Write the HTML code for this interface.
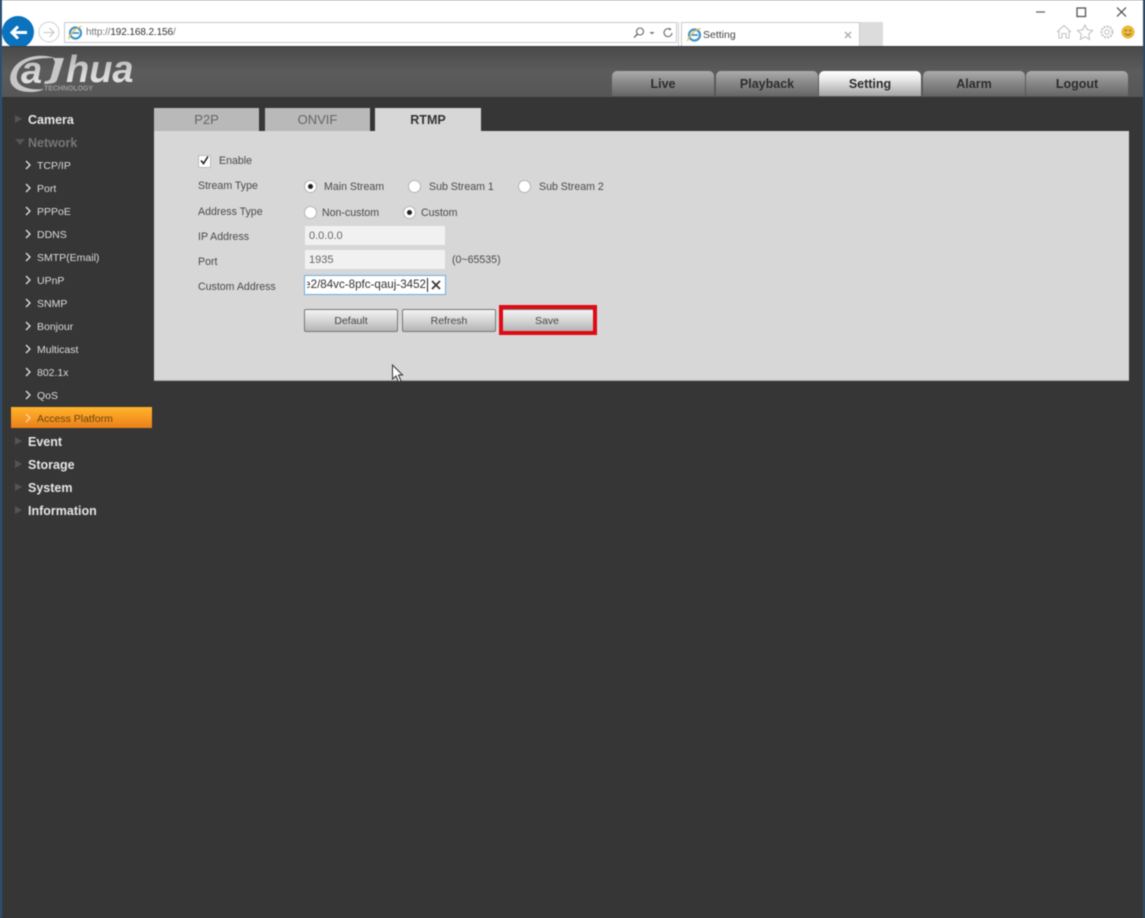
<!DOCTYPE html>
<html><head><meta charset="utf-8"><title>Setting</title>
<style>
html,body{margin:0;padding:0}
body{width:1145px;height:918px;position:relative;overflow:hidden;background:#363636;font-family:"Liberation Sans",sans-serif}
#w{position:absolute;left:0;top:0;width:1145px;height:918px;overflow:hidden;filter:blur(.45px)}
.a{position:absolute;white-space:nowrap}
.nav{position:absolute;top:71px;width:102px;height:25px;border-radius:5px 5px 0 0;background:linear-gradient(#acacac,#8e8e8e 40%,#666);text-align:center;font:bold 12.5px/26px "Liberation Sans",sans-serif;color:#2c2c2c;box-sizing:border-box}
.nav.on{background:linear-gradient(#fff,#e8e8e8 35%,#a4a4a4)}
.h{position:absolute;left:28px;color:#e6e6e6;font:bold 12.5px/16px "Liberation Sans",sans-serif}
.s{position:absolute;left:37px;color:#dcdcdc;font:10.5px/14px "Liberation Sans",sans-serif}
.tri{position:absolute;left:15px;width:0;height:0;border-left:7px solid #555;border-top:4.5px solid transparent;border-bottom:4.5px solid transparent}
.tab{position:absolute;top:108px;height:23px;background:#b9b9b9;text-align:center;font:13px/23px "Liberation Sans",sans-serif;color:#666}
.l{position:absolute;left:198px;font:10.6px/14px "Liberation Sans",sans-serif;color:#4a4a4a;white-space:nowrap}
.r{position:absolute;width:11px;height:11px;border-radius:50%;background:#fff;border:1px solid #b5b5b5}
.r.c::after{content:"";position:absolute;left:3px;top:3px;width:5px;height:5px;border-radius:50%;background:#222}
.in{position:absolute;left:305px;width:140px;height:19px;background:#f1f1f1;font:11px/21px "Liberation Sans",sans-serif;color:#666;text-indent:4px}
.b{position:absolute;top:309px;width:94px;height:23px;box-sizing:border-box;border:1px solid #777;border-radius:2px;background:linear-gradient(#f3f3f3,#d6d6d6 50%,#b4b4b4);text-align:center;font:10.5px/22px "Liberation Sans",sans-serif;color:#444}
</style></head><body><div id="w">
<!-- browser chrome -->
<div class="a" style="left:0;top:0;width:1145px;height:46px;background:#fff"></div>
<div class="a" style="left:0;top:0;width:2px;height:918px;background:#2a5578"></div>
<div class="a" style="left:1143px;top:0;width:2px;height:918px;background:#2a4f70"></div>
<svg class="a" style="left:0;top:14px" width="64" height="34" viewBox="0 0 64 34">
<circle cx="18" cy="18" r="16" fill="#0b72bd"/>
<path d="M27 18.500H12M18 12.500l-6 6 6 6" fill="none" stroke="#fff" stroke-width="3"/>
<circle cx="49" cy="18" r="10" fill="#fff" stroke="#d0d0d0"/>
<path d="M43.500 18.500h10M49.500 14l4.500 4.500-4.500 4.500" fill="none" stroke="#c4c4c4" stroke-width="1.100"/>
</svg>
<div class="a" style="left:64px;top:22px;width:613px;height:21px;box-sizing:border-box;border:1px solid #c4cccc;background:#fff"></div>
<svg class="a" style="left:67px;top:25px" width="16" height="16" viewBox="0 0 16 16"><circle cx="8.500" cy="8" r="5.500" fill="none" stroke="#3f94cc" stroke-width="2.200"/><path d="M5 8h7" stroke="#3f94cc" stroke-width="1.800"/><path d="M1.500 14C3 9 9 2.500 14.500 1.500" stroke="#e9c04a" stroke-width="1.300" fill="none"/></svg>
<div class="a" style="left:86px;top:26px;font:10px/14px 'Liberation Sans',sans-serif;color:#777;letter-spacing:-.1px">http://<span style="color:#333">192.168.2.156</span>/</div>
<svg class="a" style="left:630px;top:25px" width="46" height="16" viewBox="0 0 46 16"><circle cx="10" cy="6.500" r="3.500" fill="none" stroke="#666" stroke-width="1.100"/><path d="M7.500 9l-3.500 3.500" stroke="#666" stroke-width="1.300"/><path d="M19.500 7h5l-2.500 2.500z" fill="#777"/><path d="M40.500 4.500a4 4 0 1 0 1.500 3.500" fill="none" stroke="#666" stroke-width="1.100"/><path d="M39.500 2.500l2 2-2.500 1" fill="#666"/></svg>
<div class="a" style="left:678px;top:22px;width:1px;height:24px;background:#d0d0d0"></div>
<div class="a" style="left:681px;top:22px;width:179px;height:24px;box-sizing:border-box;border:1px solid #c8cccc;border-bottom:0;background:#fff"></div>
<div class="a" style="left:860px;top:22px;width:23px;height:24px;background:#dcdcdc"></div>
<svg class="a" style="left:686px;top:27px" width="16" height="16" viewBox="0 0 16 16"><circle cx="8.500" cy="8" r="5.500" fill="none" stroke="#3f94cc" stroke-width="2.200"/><path d="M5 8h7" stroke="#3f94cc" stroke-width="1.800"/><path d="M1.500 14C3 9 9 2.500 14.500 1.500" stroke="#e9c04a" stroke-width="1.300" fill="none"/></svg>
<div class="a" style="left:703px;top:28px;font:10.5px/14px 'Liberation Sans',sans-serif;color:#444">Setting</div>
<svg class="a" style="left:843px;top:30px" width="10" height="10" viewBox="0 0 10 10"><path d="M2 2l6 6M8 2l-6 6" stroke="#aaa" stroke-width="1.400"/></svg>
<svg class="a" style="left:1030px;top:4px" width="105" height="16" viewBox="0 0 105 16"><path d="M6 8h9" stroke="#666" stroke-width="1.300"/><rect x="47" y="4" width="8.500" height="8.500" fill="none" stroke="#555" stroke-width="1.300"/><path d="M87 3.500l9 9M96 3.500l-9 9" stroke="#444" stroke-width="1.200"/></svg>
<svg class="a" style="left:1055px;top:23px" width="84" height="18" viewBox="0 0 84 18">
<path d="M2 9l7-6.500L16 9M4 8v7h3v-4.500h4V15h3V8" fill="none" stroke="#c2c2c2" stroke-width="1.100"/>
<path d="M30 2l2.300 4.800 5.200.7-3.800 3.600.9 5.200-4.600-2.500-4.600 2.500.9-5.200L22.500 7.500l5.200-.7z" fill="none" stroke="#c2c2c2" stroke-width="1.100"/>
<circle cx="52" cy="9" r="5.500" fill="none" stroke="#c2c2c2" stroke-width="2" stroke-dasharray="2 1.200"/><circle cx="52" cy="9" r="2.300" fill="none" stroke="#c2c2c2"/>
<circle cx="73" cy="9" r="6.500" fill="#e9b83c"/><circle cx="70.800" cy="7.500" r=".9" fill="#8a6a10"/><circle cx="75.200" cy="7.500" r=".9" fill="#8a6a10"/><path d="M70 10.500c1.500 2 4.500 2 6 0" fill="none" stroke="#8a6a10"/>
</svg>
<!-- header -->
<div class="a" style="left:2px;top:46px;width:1141px;height:51px;background:linear-gradient(#4a4a4a,#5c5c5c 50%,#565656);border-top:1px solid #3c3c3c;box-sizing:border-box"></div>
<svg class="a" style="left:6px;top:50px" width="135" height="46" viewBox="0 0 135 46">
<defs><linearGradient id="g" x1="0" y1="0" x2="0" y2="1"><stop offset="0" stop-color="#a8a8a8"/><stop offset=".6" stop-color="#d8d8d8"/><stop offset="1" stop-color="#e8e8e8"/></linearGradient></defs>
<path d="M49 8C35 3 15 6 7 19C0 31 6 42 24 42C30 42 35 41 38 39C29 40 16 39 12 32C8 24 14 13 26 10C34 8 42 8 49 8Z" fill="#c6c6c6"/>
<text x="15" y="33" font-family="Liberation Sans" font-weight="bold" font-style="italic" font-size="38" fill="url(#g)">a</text>
<path d="M47 8H58L51 30C50 33 46 34 38 34L39 31C43 31 44 30 45 27L49 12Z" fill="#c8c8c8"/>
<text x="60" y="32" font-family="Liberation Sans" font-weight="bold" font-style="italic" font-size="38" fill="url(#g)">hua</text>
<text x="38" y="40.500" font-family="Liberation Sans" font-size="7" font-weight="bold" fill="#9a9a9a" textLength="49" lengthAdjust="spacingAndGlyphs">TECHNOLOGY</text>
</svg>
<div class="nav" style="left:612px">Live</div>
<div class="nav" style="left:716px">Playback</div>
<div class="nav on" style="left:819px">Setting</div>
<div class="nav" style="left:923px">Alarm</div>
<div class="nav" style="left:1026px">Logout</div>
<!-- sidebar -->
<div class="tri" style="top:115px"></div><div class="h" style="top:112px">Camera</div>
<div class="a" style="left:15px;top:139px;width:0;height:0;border-top:6px solid #555;border-left:5px solid transparent;border-right:5px solid transparent"></div><div class="h" style="top:135px;color:#777">Network</div>
<svg class="a" style="left:24px;top:156px" width="9" height="250" viewBox="0 0 9 250" fill="none" stroke="#e2e2e2" stroke-width="1.300">
<path d="M2 5l4 4-4 4M2 28l4 4-4 4M2 51l4 4-4 4M2 74l4 4-4 4M2 97l4 4-4 4M2 120l4 4-4 4M2 143l4 4-4 4M2 166l4 4-4 4M2 189l4 4-4 4M2 212l4 4-4 4M2 235l4 4-4 4"/></svg>
<div class="s" style="top:159px">TCP/IP</div>
<div class="s" style="top:182px">Port</div>
<div class="s" style="top:205px">PPPoE</div>
<div class="s" style="top:228px">DDNS</div>
<div class="s" style="top:251px">SMTP(Email)</div>
<div class="s" style="top:274px">UPnP</div>
<div class="s" style="top:297px">SNMP</div>
<div class="s" style="top:320px">Bonjour</div>
<div class="s" style="top:343px">Multicast</div>
<div class="s" style="top:366px">802.1x</div>
<div class="s" style="top:389px">QoS</div>
<div class="a" style="left:11px;top:407px;width:141px;height:21px;background:linear-gradient(#ffb52c,#f79a23 50%,#e8801a)"></div>
<svg class="a" style="left:24px;top:413px" width="9" height="12" viewBox="0 0 9 12"><path d="M2 1l4 4-4 4" fill="none" stroke="#ffd49a" stroke-width="1.300"/></svg>
<div class="s" style="top:412px;color:#6b4410">Access Platform</div>
<div class="tri" style="top:437px"></div><div class="h" style="top:434px">Event</div>
<div class="tri" style="top:460px"></div><div class="h" style="top:457px">Storage</div>
<div class="tri" style="top:483px"></div><div class="h" style="top:480px">System</div>
<div class="tri" style="top:506px"></div><div class="h" style="top:503px">Information</div>
<!-- panel -->
<div class="tab" style="left:154px;width:105px">P2P</div>
<div class="tab" style="left:265px;width:105px">ONVIF</div>
<div class="a" style="left:154px;top:131px;width:975px;height:250px;background:#d7d7d7;border-bottom:1px solid #aaa;box-sizing:border-box"></div>
<div class="tab" style="left:375px;width:106px;height:24px;background:#d7d7d7;color:#333;font-weight:bold;font-size:12.5px;line-height:24px">RTMP</div>
<div class="a" style="left:198px;top:155px;width:11px;height:11px;background:#fff;border:1px solid #bbb"></div>
<svg class="a" style="left:199px;top:155px" width="11" height="11" viewBox="0 0 11 11"><path d="M2 5.500l2.500 3L9 1.500" fill="none" stroke="#222" stroke-width="1.600"/></svg>
<div class="l" style="left:219px;top:154px">Enable</div>
<div class="l" style="top:179px">Stream Type</div>
<div class="r c" style="left:304px;top:180px"></div><div class="l" style="left:324px;top:180px">Main Stream</div>
<div class="r" style="left:408px;top:180px"></div><div class="l" style="left:429px;top:180px">Sub Stream 1</div>
<div class="r" style="left:518px;top:180px"></div><div class="l" style="left:539px;top:180px">Sub Stream 2</div>
<div class="l" style="top:205px">Address Type</div>
<div class="r" style="left:304px;top:206px"></div><div class="l" style="left:322px;top:206px">Non-custom</div>
<div class="r c" style="left:403px;top:206px"></div><div class="l" style="left:421px;top:206px">Custom</div>
<div class="l" style="top:230px">IP Address</div>
<div class="in" style="top:226px">0.0.0.0</div>
<div class="l" style="top:255px">Port</div>
<div class="in" style="top:250px">1935</div>
<div class="l" style="left:452px;top:253px">(0~65535)</div>
<div class="l" style="top:280px">Custom Address</div>
<div class="a" style="left:304px;top:275px;width:142px;height:20px;box-sizing:border-box;border:1px solid #6aaee0;background:#fff"></div>
<div class="a" style="left:307px;top:278px;width:121px;height:14px;overflow:hidden;border-right:1px solid #222;box-sizing:border-box"><span style="position:absolute;right:1px;top:0;font:11.6px/14px 'Liberation Sans',sans-serif;color:#333">e2/84vc-8pfc-qauj-3452</span></div>
<svg class="a" style="left:431px;top:280px" width="10" height="10" viewBox="0 0 10 10"><path d="M1 1l8 8M9 1l-8 8" stroke="#333" stroke-width="1.600"/></svg>
<div class="b" style="left:304px">Default</div>
<div class="b" style="left:402px">Refresh</div>
<div class="b" style="left:500px">Save</div>
<div class="a" style="left:499px;top:305px;width:98px;height:30px;box-sizing:border-box;border:4px solid #e00a14"></div>
<svg class="a" style="left:391px;top:364px" width="13" height="20" viewBox="0 0 13 20"><path d="M1.500 1v14l3.500-3 2.500 6 2.500-1-2.500-6H11.500z" fill="#fff" stroke="#333" stroke-width="1"/></svg>
</div></body></html>
